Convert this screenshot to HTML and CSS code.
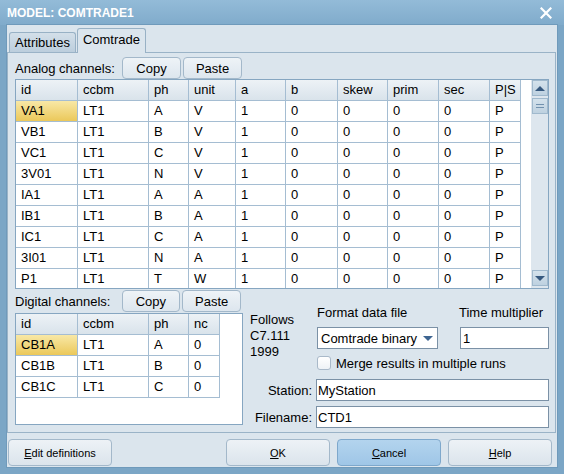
FILE: index.html
```html
<!DOCTYPE html>
<html lang="en">

<head>
    <meta charset="UTF-8">
    <title>MODEL: COMTRADE1</title>
    <link rel="stylesheet" href="styles.css">
</head>

<body>
    <div class="window">
        <div class="titlebar">
            <span class="title">MODEL: COMTRADE1</span>
            <svg class="close" width="12" height="12" viewBox="0 0 12 12">
                <path d="M1.5 1.5 L10.5 10.5 M10.5 1.5 L1.5 10.5" stroke="#fff" stroke-width="2.2" stroke-linecap="square" />
            </svg>
        </div>
        <div class="client">
            <div class="tabs">
                <div class="tab">Attributes</div>
                <div class="tab active">Comtrade</div>
            </div>
            <div class="panel">
                <div class="bar">
                    <span class="bar-label">Analog channels:</span>
                    <button class="btn">Copy</button>
                    <button class="btn">Paste</button>
                </div>
                <div class="gridbox analog">
                    <div class="grid-area">
                        <div class="grid">
                            <div class="cell hd">id</div><div class="cell hd">ccbm</div><div class="cell hd">ph</div><div class="cell hd">unit</div><div class="cell hd">a</div><div class="cell hd">b</div><div class="cell hd">skew</div><div class="cell hd">prim</div><div class="cell hd">sec</div><div class="cell hd">P|S</div>
                            <div class="cell sel">VA1</div><div class="cell">LT1</div><div class="cell">A</div><div class="cell">V</div><div class="cell">1</div><div class="cell">0</div><div class="cell">0</div><div class="cell">0</div><div class="cell">0</div><div class="cell">P</div>
                            <div class="cell">VB1</div><div class="cell">LT1</div><div class="cell">B</div><div class="cell">V</div><div class="cell">1</div><div class="cell">0</div><div class="cell">0</div><div class="cell">0</div><div class="cell">0</div><div class="cell">P</div>
                            <div class="cell">VC1</div><div class="cell">LT1</div><div class="cell">C</div><div class="cell">V</div><div class="cell">1</div><div class="cell">0</div><div class="cell">0</div><div class="cell">0</div><div class="cell">0</div><div class="cell">P</div>
                            <div class="cell">3V01</div><div class="cell">LT1</div><div class="cell">N</div><div class="cell">V</div><div class="cell">1</div><div class="cell">0</div><div class="cell">0</div><div class="cell">0</div><div class="cell">0</div><div class="cell">P</div>
                            <div class="cell">IA1</div><div class="cell">LT1</div><div class="cell">A</div><div class="cell">A</div><div class="cell">1</div><div class="cell">0</div><div class="cell">0</div><div class="cell">0</div><div class="cell">0</div><div class="cell">P</div>
                            <div class="cell">IB1</div><div class="cell">LT1</div><div class="cell">B</div><div class="cell">A</div><div class="cell">1</div><div class="cell">0</div><div class="cell">0</div><div class="cell">0</div><div class="cell">0</div><div class="cell">P</div>
                            <div class="cell">IC1</div><div class="cell">LT1</div><div class="cell">C</div><div class="cell">A</div><div class="cell">1</div><div class="cell">0</div><div class="cell">0</div><div class="cell">0</div><div class="cell">0</div><div class="cell">P</div>
                            <div class="cell">3I01</div><div class="cell">LT1</div><div class="cell">N</div><div class="cell">A</div><div class="cell">1</div><div class="cell">0</div><div class="cell">0</div><div class="cell">0</div><div class="cell">0</div><div class="cell">P</div>
                            <div class="cell">P1</div><div class="cell">LT1</div><div class="cell">T</div><div class="cell">W</div><div class="cell">1</div><div class="cell">0</div><div class="cell">0</div><div class="cell">0</div><div class="cell">0</div><div class="cell">P</div>
                        </div>
                    </div>
                    <div class="vscroll">
                        <div class="sb-btn"><span class="arrow-up"></span></div>
                        <div class="sb-btn thumb"><span class="grip"></span></div>
                        <div class="sb-track"></div>
                        <div class="sb-btn"><span class="arrow-down"></span></div>
                    </div>
                </div>
                <div class="lower">
                    <div class="digital">
                        <div class="bar">
                            <span class="bar-label">Digital channels:</span>
                            <button class="btn">Copy</button>
                            <button class="btn">Paste</button>
                        </div>
                        <div class="gridbox digital-box">
                            <div class="grid">
                                <div class="cell hd">id</div><div class="cell hd">ccbm</div><div class="cell hd">ph</div><div class="cell hd">nc</div>
                                <div class="cell sel">CB1A</div><div class="cell">LT1</div><div class="cell">A</div><div class="cell">0</div>
                                <div class="cell">CB1B</div><div class="cell">LT1</div><div class="cell">B</div><div class="cell">0</div>
                                <div class="cell">CB1C</div><div class="cell">LT1</div><div class="cell">C</div><div class="cell">0</div>
                            </div>
                        </div>
                    </div>
                    <div class="side">
                        <div class="top">
                            <div class="follows">Follows<br>C7.111<br>1999</div>
                            <div class="fields">
                                <div class="field-row">
                                    <div class="format">
                                        <div class="flabel">Format data file</div>
                                        <div class="select">Comtrade binary<span class="arrow-down dd"></span></div>
                                    </div>
                                    <div class="time">
                                        <div class="flabel">Time multiplier</div>
                                        <input class="text" type="text" value="1">
                                    </div>
                                </div>
                                <label class="check"><span class="box"></span>Merge results in multiple runs</label>
                            </div>
                        </div>
                        <div class="line">
                            <label class="llabel">Station:</label>
                            <input class="text wide" type="text" value="MyStation">
                        </div>
                        <div class="line second">
                            <label class="llabel">Filename:</label>
                            <input class="text wide" type="text" value="CTD1">
                        </div>
                    </div>
                </div>
            </div>
            <div class="footer">
                <button class="fbtn"><u>E</u>dit definitions</button>
                <button class="fbtn ok"><u>O</u>K</button>
                <button class="fbtn hot"><u>C</u>ancel</button>
                <button class="fbtn"><u>H</u>elp</button>
            </div>
        </div>
    </div>
</body>

</html>
```

FILE: styles.css
```css
* {
    box-sizing: border-box;
}

body {
    margin: 0;
    font-family: "Liberation Sans", Arial, sans-serif;
    font-size: 13px;
    color: #000;
}

.window {
    width: 564px;
    height: 474px;
    background: #7ba6c6;
    display: flex;
    flex-direction: column;
}

.titlebar {
    height: 25px;
    display: flex;
    align-items: center;
    justify-content: space-between;
    padding: 0 12px 0 7px;
    background: linear-gradient(#93bbd8, #80abcb);
}

.title {
    color: #fff;
    font-weight: bold;
    font-size: 12px;
}

.client {
    flex: 1;
    margin: 0 7px 7px;
    background: #dbe5ed;
    box-shadow: 0 0 0 1px #6f9abb;
}

/* tabs */
.tabs {
    display: flex;
    align-items: flex-end;
    height: 27px;
    padding-left: 2px;
}

.tab {
    height: 20px;
    line-height: 19px;
    padding: 0 5px;
    margin-right: 1px;
    border: 1px solid #98b1c5;
    border-bottom: none;
    border-radius: 3px 3px 0 0;
    background: linear-gradient(#d3dfe9, #bccedd);
}

.tab.active {
    height: 25px;
    line-height: 22px;
    margin-bottom: -1px;
    background: #dbe5ed;
    position: relative;
    z-index: 1;
}

.panel {
    width: 549px;
    height: 381px;
    border: 1px solid #9ab3c7;
    padding: 0 6px 7px 7px;
    background: #dbe5ed;
}

.bar {
    display: flex;
    align-items: center;
    height: 22px;
    margin-top: 4px;
}

.bar-label {
    width: 107px;
}

.btn {
    width: 59px;
    height: 22px;
    margin-right: 2px;
    padding: 0;
    font-family: inherit;
    font-size: 13px;
    color: #000;
    border: 1px solid #a3b8ca;
    border-radius: 4px;
    background: linear-gradient(#eef3f7, #dde6ee);
}

/* grids */
.gridbox {
    display: flex;
    border: 1px solid #86a6c1;
    background: #fff;
    overflow: hidden;
}

.analog {
    width: 534px;
    height: 210px;
}

.grid-area {
    flex: 1;
    overflow: hidden;
}

.grid {
    display: grid;
    grid-auto-rows: 21px;
}

.analog .grid {
    width: 505px;
    grid-template-columns: 62px 71px 40px 47px 50px 52px 50px 51px 51px 31px;
}

.cell {
    border-right: 1px solid #a5bdd2;
    border-bottom: 1px solid #a5bdd2;
    padding-left: 5px;
    line-height: 20px;
    white-space: nowrap;
    overflow: hidden;
}

.hd {
    background: linear-gradient(#edf2f6, #d9e3eb);
}

.sel {
    background: linear-gradient(#f8e8a6, #ebc85a);
}

.vscroll {
    width: 17px;
    display: flex;
    flex-direction: column;
    background: #dde6ee;
    padding: 0 0 2px 1px;
}

.sb-btn {
    height: 16px;
    display: flex;
    align-items: center;
    justify-content: center;
    border: 1px solid #a0b9cd;
    background: linear-gradient(#d4e2ec, #bed1e0);
}

.thumb {
    margin-top: 2px;
}

.sb-track {
    flex: 1;
}

.arrow-up {
    border-left: 5px solid transparent;
    border-right: 5px solid transparent;
    border-bottom: 5px solid #36597f;
}

.arrow-down {
    border-left: 5px solid transparent;
    border-right: 5px solid transparent;
    border-top: 5px solid #36597f;
}

.grip {
    width: 8px;
    height: 4px;
    border-top: 1px solid #7191ae;
    border-bottom: 1px solid #7191ae;
}

/* lower part */
.lower {
    display: flex;
}

.digital {
    width: 228px;
}

.digital .bar {
    margin-top: 1px;
    margin-bottom: 1px;
}

.digital-box {
    height: 112px;
}

.digital-box .grid {
    grid-template-columns: 62px 71px 40px 31px;
}

.side {
    flex: 1;
    margin-left: 7px;
    padding-top: 16px;
}

.top {
    display: flex;
}

.follows {
    width: 67px;
    margin-top: 7px;
    line-height: 16px;
}

.fields {
    flex: 1;
}

.field-row {
    display: flex;
    justify-content: space-between;
}

.format {
    width: 121px;
}

.time {
    width: 89px;
}

.flabel {
    line-height: 16px;
    margin-bottom: 6px;
}

.time .flabel {
    margin-left: -1px;
}

.select {
    height: 22px;
    display: flex;
    align-items: center;
    justify-content: space-between;
    padding: 0 3px 0 3px;
    border: 1px solid #7b91a6;
    background: #fff;
}

.dd {
    border-top-color: #3e6591;
    margin-right: 1px;
}

.text {
    height: 22px;
    width: 100%;
    padding: 0 2px;
    margin: 0;
    font-family: inherit;
    font-size: 13px;
    color: #000;
    border: 1px solid #7b91a6;
    background: #fff;
    outline: none;
}

.check {
    display: flex;
    align-items: center;
    height: 14px;
    margin-top: 7px;
}

.box {
    width: 14px;
    height: 14px;
    margin-right: 5px;
    border: 1px solid #a9b9c9;
    border-radius: 3px;
    background: linear-gradient(#fff, #eef2f6);
}

.line {
    display: flex;
    align-items: center;
    margin-top: 9px;
}

.line.second {
    margin-top: 5px;
}

.llabel {
    width: 62px;
    margin-right: 4px;
    text-align: right;
}

.wide {
    width: 233px;
    padding-left: 1px;
}

/* bottom buttons */
.footer {
    display: flex;
    padding: 6px 5px 0 1px;
}

.fbtn {
    width: 104px;
    height: 27px;
    padding: 0;
    font-family: inherit;
    font-size: 11px;
    color: #000;
    border: 1px solid #a3b8ca;
    border-radius: 4px;
    background: linear-gradient(#edf2f6, #dbe4ec);
}

.fbtn + .fbtn {
    margin-left: 7px;
}

.fbtn.ok {
    margin-left: auto;
}

.fbtn.hot {
    border-color: #7ea8cc;
    background: linear-gradient(#b3d4ee, #9fc6e7);
}
```
